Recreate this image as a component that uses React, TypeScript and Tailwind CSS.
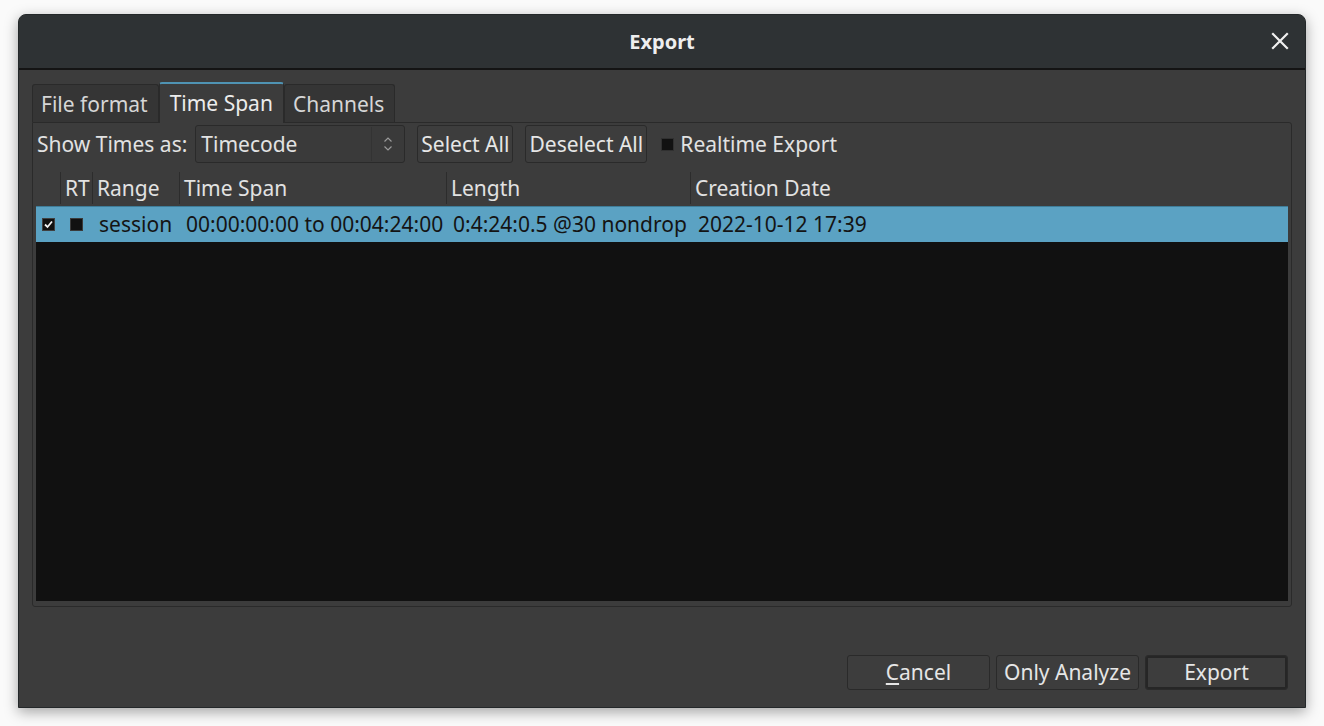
import React from "react";

const font = { fontFamily: '"Noto Sans", "DejaVu Sans", sans-serif' };

function Tab({ label, active }: { label: string; active?: boolean }) {
  if (active) {
    return (
      <div className="relative -mb-px flex h-[41px] items-center border-x border-t-2 border-[#2a2a2a] border-t-[#4f93b3] bg-[#3c3c3c] rounded-t-[3px] px-[10px] pb-[1px] text-[#ececec] z-10">
        {label}
      </div>
    );
  }
  return (
    <div className="flex h-[38px] items-center border border-b-0 border-[#2a2a2a] bg-[#353535] rounded-t-[3px] pl-[8px] pr-[10px] pt-[2px] text-[#d6d6d6]">
      {label}
    </div>
  );
}

function Btn({ children, w, def }: { children: React.ReactNode; w?: string; def?: boolean }) {
  return (
    <div
      className={`flex h-[35px] items-center justify-center rounded-[3px] border border-[#2a2a2a] bg-[#3d3d3d] text-[#e6e6e6] ${w ?? "px-[2px]"}`}
    >
      {def ? (
        <div className="flex h-full w-full items-center justify-center border-2 border-[#262626] rounded-[2px]">
          {children}
        </div>
      ) : (
        children
      )}
    </div>
  );
}

function HeadCell({ label, w }: { label: string; w?: string }) {
  return (
    <div className={`flex h-full items-center ${w ?? "flex-1"}`}>
      <div className="h-[32px] w-px bg-[#2c2c2c]" />
      <span className="pl-[4px]">{label}</span>
    </div>
  );
}

export default function App() {
  return (
    <div className="h-[726px] w-[1324px] bg-[#fafafa] pl-[18px] pt-[14px] text-[21px] leading-none" style={font}>
      <div className="flex h-[694px] w-[1288px] flex-col overflow-hidden rounded-t-[8px] border border-[#24282a] bg-[#3c3c3c] shadow-[0_4px_14px_rgba(0,0,0,0.35)]">
        {/* title bar */}
        <div className="relative flex h-[53px] shrink-0 items-center justify-center bg-[#2e3234]">
          <span className="font-bold text-[#eeeeee] text-[20px]">Export</span>
          <svg className="absolute right-[16px] top-[17px]" width="18" height="18" viewBox="0 0 18 18">
            <path d="M2 2 L16 16 M16 2 L2 16" stroke="#f0f0f0" strokeWidth="2.2" strokeLinecap="square" />
          </svg>
        </div>
        <div className="h-[2px] shrink-0 bg-[#141414]" />

        {/* body */}
        <div className="flex flex-1 flex-col px-[13px] pt-[12px]">
          <div className="flex items-end">
            <Tab label="File format" />
            <Tab label="Time Span" active />
            <Tab label="Channels" />
          </div>

          <div className="flex h-[485px] flex-col rounded-b-[3px] rounded-tr-[3px] border border-[#2a2a2a] px-[3px] pt-[2px] pb-[5px]">
            {/* toolbar */}
            <div className="flex h-[38px] items-center text-[#e2e2e2]">
              <span className="ml-px mr-[8px]">Show Times as:</span>
              <div className="flex h-[38px] w-[210px] items-center rounded-[3px] border border-[#2a2a2a] bg-[#3a3a3a]">
                <span className="flex-1 pl-[5px]">Timecode</span>
                <div className="h-[34px] w-px bg-[#333]" />
                <svg className="mx-[11px]" width="10" height="16" viewBox="0 0 10 16">
                  <path d="M1.5 5.5 L5 2 L8.5 5.5 M1.5 10.5 L5 14 L8.5 10.5" stroke="#9a9a9a" strokeWidth="1.2" fill="none" />
                </svg>
              </div>
              <div className="ml-[12px]">
                <Btn w="w-[96px] h-[38px]">Select All</Btn>
              </div>
              <div className="ml-[12px]">
                <Btn w="w-[122px] h-[38px]">Deselect All</Btn>
              </div>
              <div className="ml-[14px] mr-[6px] h-[13px] w-[13px] border border-[#303030] bg-[#111]" />
              <span>Realtime Export</span>
            </div>

            {/* table */}
            <div className="mt-[7px] flex flex-1 flex-col bg-[#111111]">
              <div className="flex h-[36px] items-center bg-[#3c3c3c] text-[#e2e2e2]">
                <div className="w-[24px]" />
                <HeadCell label="RT" w="w-[32px]" />
                <HeadCell label="Range" w="w-[87px]" />
                <HeadCell label="Time Span" w="w-[267px]" />
                <HeadCell label="Length" w="w-[244px]" />
                <HeadCell label="Creation Date" />
              </div>
              <div className="flex h-[36px] items-center border-t border-[#3f7d99] bg-[#5ba2c3] text-[#141414]">
                <div className="flex w-[24px] justify-center pl-[1px]">
                  <div className="flex h-[13px] w-[13px] items-center justify-center border border-[#404040] bg-[#111]">
                    <svg width="9" height="9" viewBox="0 0 9 9">
                      <path d="M1 4.5 L3.5 7 L8 1.5" stroke="#f2f2f2" strokeWidth="1.8" fill="none" />
                    </svg>
                  </div>
                </div>
                <div className="flex w-[32px] justify-center">
                  <div className="h-[13px] w-[13px] border border-[#3a3a3a] bg-[#111]" />
                </div>
                <div className="w-[87px] whitespace-nowrap pl-[7px]">session</div>
                <div className="w-[267px] whitespace-nowrap pl-[7px]">00:00:00:00 to 00:04:24:00</div>
                <div className="w-[244px] whitespace-nowrap pl-[7px]">0:4:24:0.5 @30 nondrop</div>
                <div className="flex-1 whitespace-nowrap pl-[8px]">2022-10-12 17:39</div>
              </div>
            </div>
          </div>

          {/* footer */}
          <div className="mt-[48px] flex justify-end gap-[6px] pr-[4px]">
            <Btn w="w-[143px]">
              <span>
                <span className="underline underline-offset-[3px]">C</span>ancel
              </span>
            </Btn>
            <Btn w="w-[143px]">Only Analyze</Btn>
            <Btn w="w-[143px]" def>
              Export
            </Btn>
          </div>
        </div>
      </div>
    </div>
  );
}
